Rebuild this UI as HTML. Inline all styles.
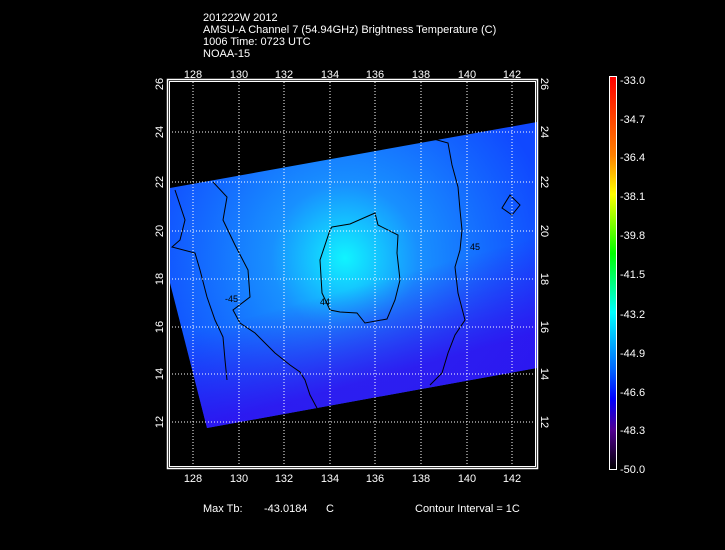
<!DOCTYPE html>
<html><head><style>
html,body{margin:0;padding:0;background:#000;}
body{width:725px;height:550px;overflow:hidden;position:relative;font-family:"Liberation Sans",sans-serif;color:#fff;}
.t{position:absolute;font-size:11px;line-height:12px;white-space:nowrap;}
</style></head><body>
<div class="t" style="left:203px;top:12px;">201222W 2012</div>
<div class="t" style="left:203px;top:24px;">AMSU-A Channel 7 (54.94GHz) Brightness Temperature (C)</div>
<div class="t" style="left:203px;top:36px;">1006 Time: 0723 UTC</div>
<div class="t" style="left:203px;top:48px;">NOAA-15</div>
<svg width="725" height="550" style="position:absolute;left:0;top:0" xmlns="http://www.w3.org/2000/svg">
<defs>
<radialGradient id="g" cx="345" cy="258" r="210" gradientUnits="userSpaceOnUse">
<stop offset="0" stop-color="#10f4ff"/>
<stop offset="0.15" stop-color="#14c8ff"/>
<stop offset="0.35" stop-color="#1890ff"/>
<stop offset="0.7" stop-color="#1468ff"/>
<stop offset="1" stop-color="#1048ff"/>
</radialGradient>
<linearGradient id="cb" x1="0" y1="0" x2="0" y2="1">
<stop offset="0" stop-color="#ff0000"/>
<stop offset="0.2" stop-color="#ff8000"/>
<stop offset="0.3" stop-color="#ffff00"/>
<stop offset="0.45" stop-color="#00ff00"/>
<stop offset="0.6" stop-color="#00ffff"/>
<stop offset="0.75" stop-color="#0060ff"/>
<stop offset="0.82" stop-color="#0000ff"/>
<stop offset="0.9" stop-color="#500090"/>
<stop offset="1" stop-color="#000000"/>
</linearGradient>
<linearGradient id="dk" x1="200" y1="330" x2="225" y2="420" gradientUnits="userSpaceOnUse">
<stop offset="0" stop-color="#3010ee" stop-opacity="0"/>
<stop offset="1" stop-color="#3010ee" stop-opacity="0.85"/>
</linearGradient>
</defs>
<polygon points="170,188 537,122 537,368 207,428 170,283" fill="url(#g)"/>
<polygon points="170,188 537,122 537,368 207,428 170,283" fill="url(#dk)"/>
<g fill="none" stroke="#000" stroke-width="1">
<path d="M332,227 L350,224 L375,213 L378,225 L398,235 L397,253 L400,280 L395,300 L387,319 L365,323 L357,313 L340,312 L330,310 L322,293 L320,260 L330,230 Z"/>
<path d="M213,182 L227,197 L223,220 L235,245 L248,270 L250,297 L233,310 L240,323 L255,333 L275,353 L290,365 L300,372 L305,380 L310,395 L318,410"/>
<path d="M430,138 L448,143 L452,165 L458,187 L460,210 L462,230 L460,250 L455,267 L458,293 L465,320 L455,335 L448,353 L442,373 L430,385"/>
<path d="M175,190 L185,220 L180,240 L172,247 L195,253 L200,270 L207,297 L215,320 L223,337 L225,360 L227,380"/>
<path d="M510,195 L520,205 L512,215 L502,208 Z"/>
</g>
<g fill="#000" font-family="Liberation Sans" font-size="9">
<text x="225" y="302">-45</text><text x="470" y="250">45</text><text x="320" y="305">44</text>
</g>
<g stroke="#fff" stroke-width="1" stroke-dasharray="1,2">
<line x1="193" y1="82" x2="193" y2="466"/><line x1="239" y1="82" x2="239" y2="466"/>
<line x1="284" y1="82" x2="284" y2="466"/><line x1="330" y1="82" x2="330" y2="466"/>
<line x1="375" y1="82" x2="375" y2="466"/><line x1="421" y1="82" x2="421" y2="466"/>
<line x1="467" y1="82" x2="467" y2="466"/><line x1="512" y1="82" x2="512" y2="466"/>
<line x1="169" y1="132" x2="536" y2="132"/><line x1="169" y1="182" x2="536" y2="182"/>
<line x1="169" y1="231" x2="536" y2="231"/><line x1="169" y1="279" x2="536" y2="279"/>
<line x1="169" y1="327" x2="536" y2="327"/><line x1="169" y1="374" x2="536" y2="374"/>
<line x1="169" y1="422" x2="536" y2="422"/>
</g>
<rect x="167.5" y="79.5" width="370" height="389" fill="none" stroke="#fff" stroke-width="1.5"/>
<rect x="169.5" y="81.5" width="366" height="385" fill="none" stroke="#fff" stroke-width="1"/>
<g fill="#fff" font-family="Liberation Sans" font-size="11" text-anchor="middle">
<text x="193" y="78">128</text><text x="239" y="78">130</text><text x="284" y="78">132</text><text x="330" y="78">134</text>
<text x="375" y="78">136</text><text x="421" y="78">138</text><text x="467" y="78">140</text><text x="512" y="78">142</text>
<text x="193" y="482">128</text><text x="239" y="482">130</text><text x="284" y="482">132</text><text x="330" y="482">134</text>
<text x="375" y="482">136</text><text x="421" y="482">138</text><text x="467" y="482">140</text><text x="512" y="482">142</text>
</g>
<g fill="#fff" font-family="Liberation Sans" font-size="11" text-anchor="middle">
<text transform="translate(163,84) rotate(-90)">26</text><text transform="translate(163,132) rotate(-90)">24</text>
<text transform="translate(163,182) rotate(-90)">22</text><text transform="translate(163,231) rotate(-90)">20</text>
<text transform="translate(163,279) rotate(-90)">18</text><text transform="translate(163,327) rotate(-90)">16</text>
<text transform="translate(163,374) rotate(-90)">14</text><text transform="translate(163,422) rotate(-90)">12</text>
<text transform="translate(541,84) rotate(90)">26</text><text transform="translate(541,132) rotate(90)">24</text>
<text transform="translate(541,182) rotate(90)">22</text><text transform="translate(541,231) rotate(90)">20</text>
<text transform="translate(541,279) rotate(90)">18</text><text transform="translate(541,327) rotate(90)">16</text>
<text transform="translate(541,374) rotate(90)">14</text><text transform="translate(541,422) rotate(90)">12</text>
</g>
<rect x="609.5" y="76.5" width="7" height="393" fill="url(#cb)" stroke="#fff" stroke-width="1"/>
<g fill="#fff" font-family="Liberation Sans" font-size="11">
<text x="620" y="84">-33.0</text><text x="620" y="123">-34.7</text><text x="620" y="161">-36.4</text>
<text x="620" y="200">-38.1</text><text x="620" y="239">-39.8</text><text x="620" y="278">-41.5</text>
<text x="620" y="318">-43.2</text><text x="620" y="357">-44.9</text><text x="620" y="396">-46.6</text>
<text x="620" y="434">-48.3</text><text x="620" y="473">-50.0</text>
<text x="203" y="512">Max Tb:</text><text x="264" y="512">-43.0184</text><text x="326" y="512">C</text>
<text x="415" y="512">Contour Interval = 1C</text>
</g>
</svg>
</body></html>
